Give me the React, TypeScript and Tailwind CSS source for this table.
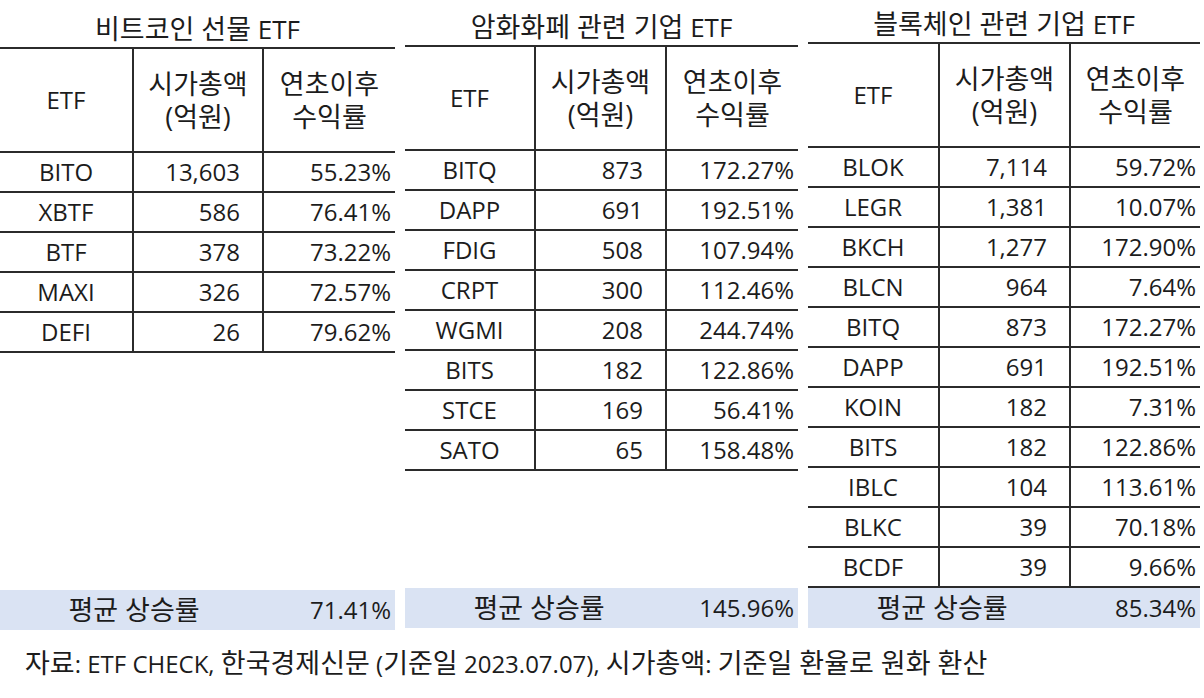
import React from "react";

type Row = [string, string, string];

type Block = {
  title: string;
  rows: Row[];
  avg: string;
  shift: string;
  tail: string;
  cols: string;
};

const blocks: Block[] = [
  {
    title: "비트코인 선물",
    rows: [
      ["BITO", "13,603", "55.23%"],
      ["XBTF", "586", "76.41%"],
      ["BTF", "378", "73.22%"],
      ["MAXI", "326", "72.57%"],
      ["DEFI", "26", "79.62%"],
    ],
    avg: "71.41%",
    shift: "pt-[5px]",
    tail: "pb-0",
    cols: "grid-cols-[132px_130px_1fr]",
  },
  {
    title: "암화화페 관련 기업",
    rows: [
      ["BITQ", "873", "172.27%"],
      ["DAPP", "691", "192.51%"],
      ["FDIG", "508", "107.94%"],
      ["CRPT", "300", "112.46%"],
      ["WGMI", "208", "244.74%"],
      ["BITS", "182", "122.86%"],
      ["STCE", "169", "56.41%"],
      ["SATO", "65", "158.48%"],
    ],
    avg: "145.96%",
    shift: "pt-[3px]",
    tail: "pb-[2px]",
    cols: "grid-cols-[129px_131px_1fr]",
  },
  {
    title: "블록체인 관련 기업",
    rows: [
      ["BLOK", "7,114", "59.72%"],
      ["LEGR", "1,381", "10.07%"],
      ["BKCH", "1,277", "172.90%"],
      ["BLCN", "964", "7.64%"],
      ["BITQ", "873", "172.27%"],
      ["DAPP", "691", "192.51%"],
      ["KOIN", "182", "7.31%"],
      ["BITS", "182", "122.86%"],
      ["IBLC", "104", "113.61%"],
      ["BLKC", "39", "70.18%"],
      ["BCDF", "39", "9.66%"],
    ],
    avg: "85.34%",
    shift: "pt-0",
    tail: "pb-[4px]",
    cols: "grid-cols-[130px_131px_1fr]",
  },
];

// Hangul in Noto Sans CJK draws smaller than the source font, so it gets a bump
const K = ({ children }: { children: React.ReactNode }) => (
  <span className="text-[27px]">{children}</span>
);

const EtfTable = ({ block }: { block: Block }) => {
  const line = "border-[#2b2b2b]";
  return (
    <div className={`flex h-full flex-col ${block.shift} ${block.tail}`}>
      <div className="flex h-[42px] items-center justify-center pt-[6px] leading-[36px]">
        <K>{block.title}</K>
        <span className="text-[26px]">&nbsp;ETF</span>
      </div>
      <div className={`grid ${block.cols} border-t-2 ${line}`}>
        <div
          className={`flex h-[104px] items-center justify-center border-b-2 ${line}`}
        >
          ETF
        </div>
        <div
          className={`flex h-[104px] flex-col items-center justify-center border-b-2 border-l-2 leading-[33px] ${line}`}
        >
          <K>시가총액</K>
          <K>(억원)</K>
        </div>
        <div
          className={`flex h-[104px] flex-col items-center justify-center border-b-2 border-l-2 leading-[33px] ${line}`}
        >
          <K>연초이후</K>
          <K>수익률</K>
        </div>
        {block.rows.map(([name, cap, ret]) => (
          <React.Fragment key={name + cap}>
            <div
              className={`flex h-[40px] items-center justify-center border-b-2 ${line}`}
            >
              {name}
            </div>
            <div
              className={`flex h-[40px] items-center justify-end border-b-2 border-l-2 pr-[22px] ${line}`}
            >
              {cap}
            </div>
            <div
              className={`flex h-[40px] items-center justify-end border-b-2 border-l-2 pr-[4px] ${line}`}
            >
              {ret}
            </div>
          </React.Fragment>
        ))}
      </div>
      <div className="mt-auto flex h-[40px] items-center bg-[#dae3f3] leading-[40px]">
        <span className="flex w-[262px] justify-center pl-[6px]">
          <K>평균 상승률</K>
        </span>
        <span className="flex-1 pr-[4px] text-right">{block.avg}</span>
      </div>
    </div>
  );
};

export default function App() {
  return (
    <div
      className="h-[698px] w-[1204px] bg-white text-[24px] text-[#1c1c1c]"
      style={{ fontFamily: '"Open Sans", "Noto Sans CJK KR", sans-serif' }}
    >
      <div className="flex h-[630px] gap-[10px]">
        <div className="w-[395px]">
          <EtfTable block={blocks[0]} />
        </div>
        <div className="w-[393px]">
          <EtfTable block={blocks[1]} />
        </div>
        <div className="w-[392px]">
          <EtfTable block={blocks[2]} />
        </div>
      </div>
      <div className="pl-[25px] pt-[19px] leading-[28px]">
        <K>자료</K>: ETF CHECK, <K>한국경제신문</K> (<K>기준일</K> 2023.07.07),{" "}
        <K>시가총액</K>: <K>기준일 환율로 원화 환산</K>
      </div>
    </div>
  );
}
